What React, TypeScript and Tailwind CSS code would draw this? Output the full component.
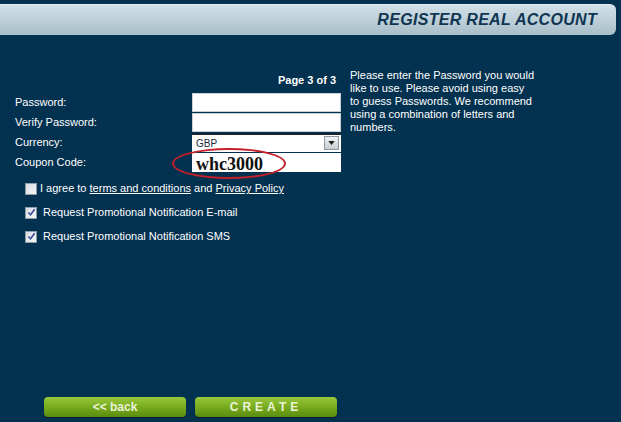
import React from 'react';

const font = { fontFamily: '"Liberation Sans", Tahoma, Arial, sans-serif' };

function Row({ label, children }: { label: string; children: React.ReactNode }) {
  return (
    <div className="flex h-[20px] items-center">
      <div className="w-[177px] text-[11px] text-white">{label}</div>
      <div className="h-[20px] w-[149px]">{children}</div>
    </div>
  );
}

function Check({ checked, children }: { checked?: boolean; children: React.ReactNode }) {
  return (
    <div className="flex h-[24px] items-center gap-[3px]">
      <div className="flex h-[12px] w-[12px] items-center justify-center border border-[#8a9aa6] bg-gradient-to-br from-[#d8dde2] to-[#f4f6f8]">
        {checked && (
          <svg viewBox="0 0 10 10" className="h-[9px] w-[9px]">
            <path d="M1.5 5 L4 7.5 L8.5 1.5" fill="none" stroke="#3d4fa0" strokeWidth="1.8" />
          </svg>
        )}
      </div>
      <span className="text-[11px] text-white">{children}</span>
    </div>
  );
}

function GreenButton({ children, wide }: { children: React.ReactNode; wide?: boolean }) {
  return (
    <button
      className={
        'h-[20px] w-[142px] rounded-[4px] bg-gradient-to-b from-[#97c83a] via-[#78ab1d] to-[#5b8c10] text-[12px] font-bold text-[#eaf2d8] shadow-[0_1px_1px_rgba(0,0,0,0.4)] ' +
        (wide ? 'tracking-[4px]' : '')
      }
    >
      {children}
    </button>
  );
}

export default function App() {
  return (
    <div className="h-[422px] w-[621px] overflow-hidden bg-[#033150] pt-[4px]" style={font}>
      <div className="mr-[5px] flex h-[31px] items-center justify-end rounded-r-[6px] border-t border-[#e6eef2] bg-gradient-to-b from-[#d2e0e7] to-[#a9bec8] pr-[19px]">
        <span className="text-[16px] font-bold italic tracking-[0.3px] text-[#0f3553]">REGISTER REAL ACCOUNT</span>
      </div>

      <div className="flex pt-[33px]">
        <div className="w-[341px] pl-[15px]">
          <div className="mt-[4px] pr-[5px] text-right text-[11px] font-bold text-white">Page 3 of 3</div>
          <div className="mt-[4px]">
            <Row label="Password:">
              <div className="h-[19px] w-full border border-[#c9d1d6] bg-white" />
            </Row>
            <Row label="Verify Password:">
              <div className="h-[19px] w-full border border-[#c9d1d6] bg-white" />
            </Row>
            <Row label="Currency:">
              <div className="flex h-[19px] w-full items-center justify-between border-t-2 border-[#1a2530] bg-white pl-[4px] pr-[2px]">
                <span className="text-[10px] text-[#1a2a38]">GBP</span>
                <div className="flex h-[14px] w-[15px] items-center justify-center border border-[#8d98a2] bg-gradient-to-b from-[#f0f2f4] to-[#c8cdd2]">
                  <svg viewBox="0 0 8 5" className="h-[4px] w-[7px]">
                    <path d="M0 0 H8 L4 5 Z" fill="#1a1a1a" />
                  </svg>
                </div>
              </div>
            </Row>
            <Row label="Coupon Code:">
              <div className="relative h-[19px] w-full bg-white">
                <span className="absolute left-[4px] top-[-2px] text-[18px] font-bold text-[#111]" style={{ fontFamily: '"Liberation Serif", serif' }}>
                  whc3000
                </span>
                <div className="absolute left-[-20px] top-[-5px] h-[31px] w-[114px] rounded-[50%] border-2 border-[#c4202a]" />
              </div>
            </Row>
          </div>

          <div className="mt-[4px] pl-[10px]">
            <Check>
              I agree to <span className="underline">terms and conditions</span> and{' '}
              <span className="underline">Privacy Policy</span>
            </Check>
            <Check checked>&nbsp;Request Promotional Notification E-mail</Check>
            <Check checked>&nbsp;Request Promotional Notification SMS</Check>
          </div>

          <div className="mt-[148px] flex gap-[9px] pl-[29px]">
            <GreenButton>&lt;&lt; back</GreenButton>
            <GreenButton wide>CREATE</GreenButton>
          </div>
        </div>

        <div className="w-[195px] pl-[9px] pt-[1px] text-[11px] leading-[13px] text-white">
          Please enter the Password you would like to use. Please avoid using easy to guess Passwords. We recommend using a combination of letters and numbers.
        </div>
      </div>
    </div>
  );
}
